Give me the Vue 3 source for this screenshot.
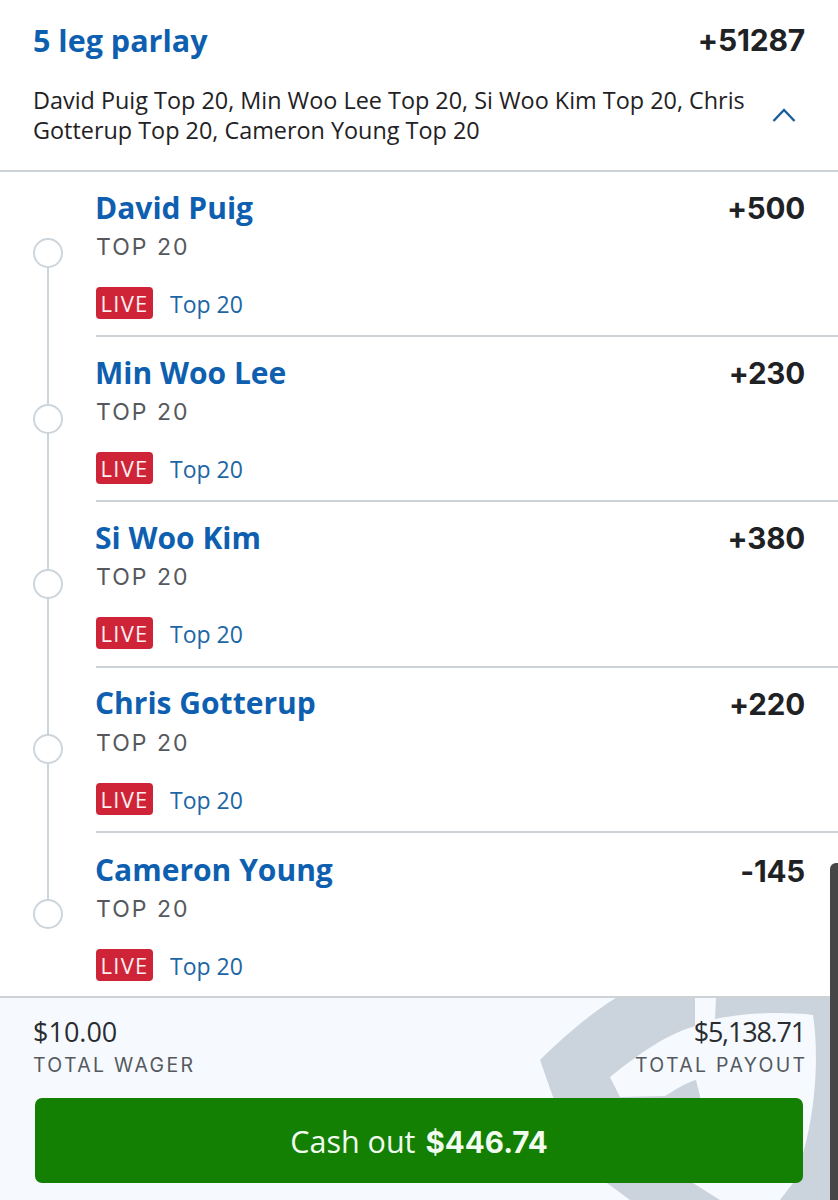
<template>
  <div class="slip">
    <header class="head">
      <div class="head-top">
        <span class="title">5 leg parlay</span>
        <span class="odds">+51287</span>
      </div>
      <div class="summary">
        <p>David Puig Top 20, Min Woo Lee Top 20, Si Woo Kim Top 20, Chris Gotterup Top 20, Cameron Young Top 20</p>
        <svg class="chevron" width="24" height="16" viewBox="0 0 24 16">
          <path d="M1.5 14 L12 3 L22.5 14" fill="none" stroke="#1a5f9e" stroke-width="2.4" />
        </svg>
      </div>
    </header>

    <section class="legs">
      <div v-for="(leg, i) in legs" :key="leg.name" class="leg" :class="{ last: i === legs.length - 1 }">
        <div class="rail">
          <span class="dot"></span>
        </div>
        <div class="leg-body">
          <div class="leg-top">
            <span class="name">{{ leg.name }}</span>
            <span class="leg-odds">{{ leg.odds }}</span>
          </div>
          <div class="market">TOP 20</div>
          <div class="status">
            <span class="live">LIVE</span>
            <span class="event">Top 20</span>
          </div>
        </div>
      </div>
    </section>

    <footer class="foot">
      <svg class="mark" width="300" height="202" viewBox="530 998 300 202">
        <path d="M619 996 C592 1012 562 1038 540 1060 L553 1097 L607 1183 L630 1200 H830 V996 Z" fill="#cbd3dc" />
        <path d="M610 1077 C640 1053 665 1035 695 1026 L695 996 H716 L715 1019 C750 1012 785 1012 813 1015 C820 1060 815 1130 793 1183 L780 1200 H720 L693 1183 L700 1096 L696 1080 C685 1083 675 1090 665 1096 L620 1097 Z" fill="#f6faff" />
      </svg>
      <div class="totals">
        <div>
          <div class="amount">$10.00</div>
          <div class="caption">TOTAL WAGER</div>
        </div>
        <div class="right">
          <div class="amount tight">$5,138.71</div>
          <div class="caption">TOTAL PAYOUT</div>
        </div>
      </div>
      <button class="cash">Cash out <b>$446.74</b></button>
    </footer>
    <div class="scrollbar"></div>
  </div>
</template>

<script setup>
const legs = [
  { name: 'David Puig', odds: '+500' },
  { name: 'Min Woo Lee', odds: '+230' },
  { name: 'Si Woo Kim', odds: '+380' },
  { name: 'Chris Gotterup', odds: '+220' },
  { name: 'Cameron Young', odds: '-145' }
]
</script>

<style>
html, body { background: #fff; }
</style>

<style scoped>
.slip {
  position: relative;
  width: 838px;
  height: 1200px;
  overflow: hidden;
  background: #fff;
  font-family: "Open Sans", "Liberation Sans", sans-serif;
  color: #1f2225;
}
.head {
  height: 172px;
  box-sizing: border-box;
  padding: 20px 33px 0;
  border-bottom: 2px solid #cdd2d7;
}
.head-top {
  display: flex;
  justify-content: space-between;
  align-items: center;
  height: 40px;
}
.title {
  font-size: 30.5px;
  font-weight: 700;
  color: #0e5fb0;
}
.odds {
  font-family: Inter, "Liberation Sans", sans-serif;
  font-size: 30px;
  font-weight: 700;
  letter-spacing: -0.2px;
}
.summary {
  display: flex;
  justify-content: space-between;
  align-items: center;
  margin-top: 25px;
}
.summary p {
  margin: 0;
  width: 725px;
  font-size: 23.4px;
  line-height: 30px;
}
.chevron { margin-right: 9px; }
.legs { height: 824px; }
.leg {
  display: flex;
  height: 165.2px;
}
.rail {
  position: relative;
  width: 96px;
  flex: none;
}
.rail::before {
  content: "";
  position: absolute;
  left: 47px;
  top: 0;
  bottom: 0;
  width: 2px;
  background: #cdd5dc;
}
.leg:first-child .rail::before { top: 82px; }
.leg.last .rail::before { bottom: 82px; }
.dot {
  position: absolute;
  left: 33px;
  top: 66.4px;
  width: 26px;
  height: 26px;
  border: 2px solid #cdd5dc;
  border-radius: 50%;
  background: #fff;
}
.leg-body {
  flex: 1;
  box-sizing: border-box;
  padding: 15px 33px 0 0;
  border-bottom: 2px solid #cdd2d7;
}
.leg.last .leg-body {
  padding-top: 17px;
  border-bottom: none;
}
.leg-top {
  display: flex;
  justify-content: space-between;
  align-items: center;
  height: 40px;
}
.name {
  margin-left: -1px;
  font-size: 30px;
  font-weight: 700;
  color: #0e5fb0;
}
.leg-odds {
  margin-top: 2px;
  font-family: Inter, "Liberation Sans", sans-serif;
  font-size: 29.6px;
  font-weight: 700;
  letter-spacing: -0.2px;
}
.market {
  margin-top: 6px;
  font-family: Inter, "Liberation Sans", sans-serif;
  font-size: 23px;
  line-height: 28px;
  letter-spacing: 2px;
  color: #55595e;
}
.leg.last .market { margin-top: 5px; }
.status {
  display: flex;
  align-items: center;
  gap: 17px;
  margin-top: 26px;
}
.live {
  width: 57px;
  height: 32px;
  border-radius: 4px;
  background: #cf2438;
  color: #fdeef0;
  font-size: 22px;
  line-height: 32px;
  text-align: center;
  letter-spacing: 1.2px;
}
.event {
  margin-top: 2px;
  font-size: 23px;
  line-height: 28px;
  color: #1d66a5;
}
.foot {
  position: relative;
  height: 204px;
  box-sizing: border-box;
  padding: 19px 33px 0;
  background: #f6faff;
  border-top: 2px solid #cdd2d7;
  overflow: hidden;
}
.mark {
  position: absolute;
  left: 530px;
  top: 0;
}
.totals {
  position: relative;
  display: flex;
  justify-content: space-between;
}
.right { text-align: right; }
.amount {
  font-size: 27px;
  line-height: 30px;
  color: #2a2d30;
}
.amount.tight {
  letter-spacing: -1.2px;
}
.caption {
  margin: 6px -2.5px 0 0;
  font-family: Inter, "Liberation Sans", sans-serif;
  font-size: 19.5px;
  line-height: 24px;
  letter-spacing: 2.3px;
  color: #55595e;
}
.cash {
  position: relative;
  display: block;
  width: 768px;
  height: 85px;
  margin: 21px 0 0 2px;
  border: none;
  border-radius: 7px;
  background: #138003;
  color: #f2fbef;
  font-family: inherit;
  font-size: 30.5px;
}
.cash b {
  margin-left: 2px;
  font-family: Inter, "Liberation Sans", sans-serif;
  font-size: 29.6px;
  font-weight: 700;
}
.scrollbar {
  position: absolute;
  right: 0;
  top: 863px;
  width: 8px;
  bottom: 0;
  background: #464646;
  border-radius: 6px 0 0 0;
}
</style>
